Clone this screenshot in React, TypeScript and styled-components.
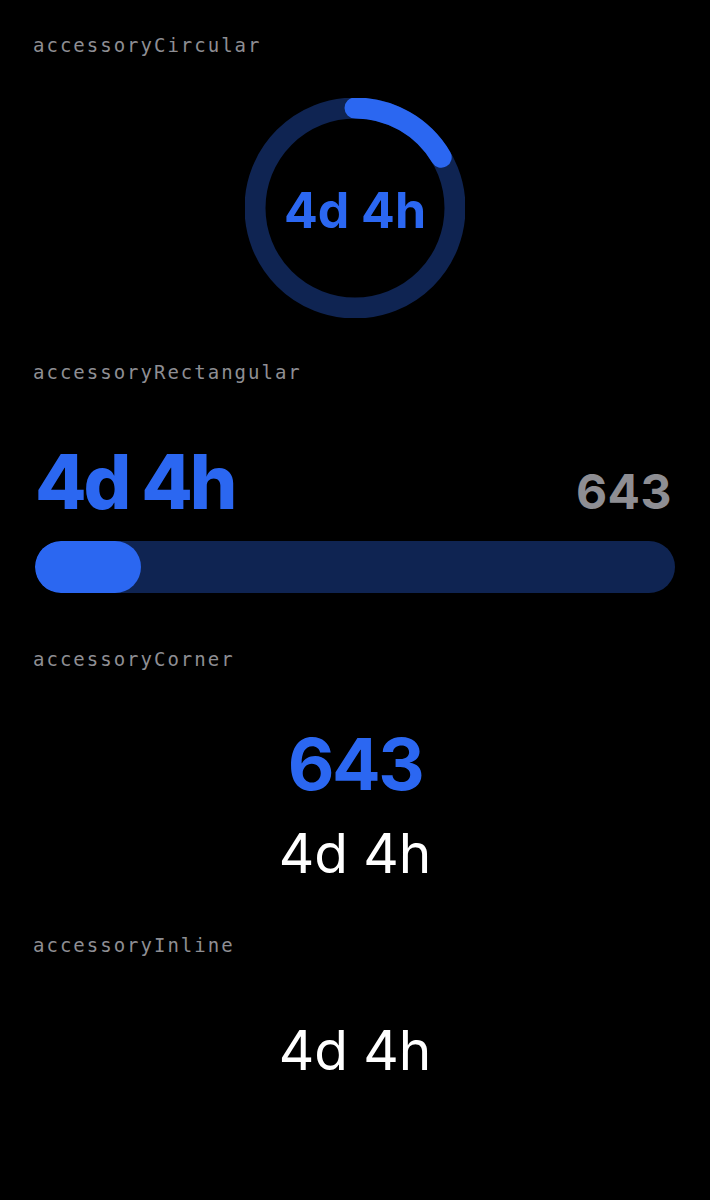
import styled, { createGlobalStyle } from "styled-components";

const BLUE = "#2b67f1";
const NAVY = "#0f2452";

const GlobalStyle = createGlobalStyle`
  html, body {
    margin: 0;
    padding: 0;
    background: #000;
  }
  body {
    font-family: Inter, "Noto Sans", sans-serif;
    -webkit-font-smoothing: antialiased;
  }
`;

const progress = 0.165;
const timeLeft = "4d 4h";
const count = "643";

const Ring = ({ value }: { value: number }) => {
  const r = 100;
  const c = 2 * Math.PI * r;
  return (
    <RingBox>
      <svg width="220" height="220" viewBox="0 0 220 220">
        <circle cx="110" cy="110" r={r} fill="none" stroke={NAVY} strokeWidth="21" />
        <circle
          cx="110"
          cy="110"
          r={r}
          fill="none"
          stroke={BLUE}
          strokeWidth="21"
          strokeLinecap="round"
          strokeDasharray={`${c * value} ${c}`}
          transform="rotate(-90 110 110)"
        />
      </svg>
      <RingText>{timeLeft}</RingText>
    </RingBox>
  );
};

export default function App() {
  return (
    <>
      <GlobalStyle />
      <Page>
        <Label>accessoryCircular</Label>
        <CircularWrap>
          <Ring value={progress} />
        </CircularWrap>

        <Label $gap={42}>accessoryRectangular</Label>
        <RectRow>
          <BigTime>{timeLeft}</BigTime>
          <GrayCount>{count}</GrayCount>
        </RectRow>
        <Bar>
          <BarFill style={{ width: `${progress * 100}%` }} />
        </Bar>

        <Label $gap={54}>accessoryCorner</Label>
        <CornerCount>{count}</CornerCount>
        <PlainTime $gap={26}>{timeLeft}</PlainTime>

        <Label $gap={52}>accessoryInline</Label>
        <PlainTime $gap={66}>{timeLeft}</PlainTime>
      </Page>
    </>
  );
}

const Page = styled.div`
  width: 710px;
  min-height: 1200px;
  box-sizing: border-box;
  padding: 33px 33px 0;
  background: #000;
  display: flex;
  flex-direction: column;
`;

const Label = styled.div<{ $gap?: number }>`
  margin-top: ${(p) => p.$gap ?? 0}px;
  font-family: "DejaVu Sans Mono", "Liberation Mono", monospace;
  font-size: 19px;
  line-height: 24px;
  letter-spacing: 2px;
  color: #8e8e93;
`;

const CircularWrap = styled.div`
  margin-top: 41px;
  display: flex;
  justify-content: center;
`;

const RingBox = styled.div`
  position: relative;
  width: 220px;
  height: 220px;

  svg {
    display: block;
  }
`;

const RingText = styled.div`
  position: absolute;
  inset: 0;
  display: flex;
  align-items: center;
  justify-content: center;
  padding-top: 4px;
  font-size: 50px;
  font-weight: 700;
  color: ${BLUE};
`;

const RectRow = styled.div`
  margin-top: 60px;
  display: flex;
  justify-content: space-between;
  align-items: baseline;
  padding: 0 5px 0 2px;
`;

const BigTime = styled.div`
  font-size: 75px;
  line-height: 75px;
  font-weight: 800;
  letter-spacing: -3.2px;
  color: ${BLUE};
`;

const GrayCount = styled.div`
  font-size: 48px;
  line-height: 48px;
  font-weight: 700;
  letter-spacing: 0.5px;
  color: #8e8e93;
`;

const Bar = styled.div`
  margin: 22px 2px 0;
  height: 52px;
  border-radius: 26px;
  background: ${NAVY};
  overflow: hidden;
  display: flex;
`;

const BarFill = styled.div`
  height: 100%;
  border-radius: 26px;
  background: ${BLUE};
`;

const CornerCount = styled.div`
  margin-top: 56px;
  text-align: center;
  font-size: 72px;
  line-height: 73px;
  font-weight: 700;
  letter-spacing: -2.5px;
  color: ${BLUE};
`;

const PlainTime = styled.div<{ $gap: number }>`
  margin-top: ${(p) => p.$gap}px;
  text-align: center;
  font-size: 55px;
  line-height: 55px;
  font-weight: 400;
  color: #fff;
`;
